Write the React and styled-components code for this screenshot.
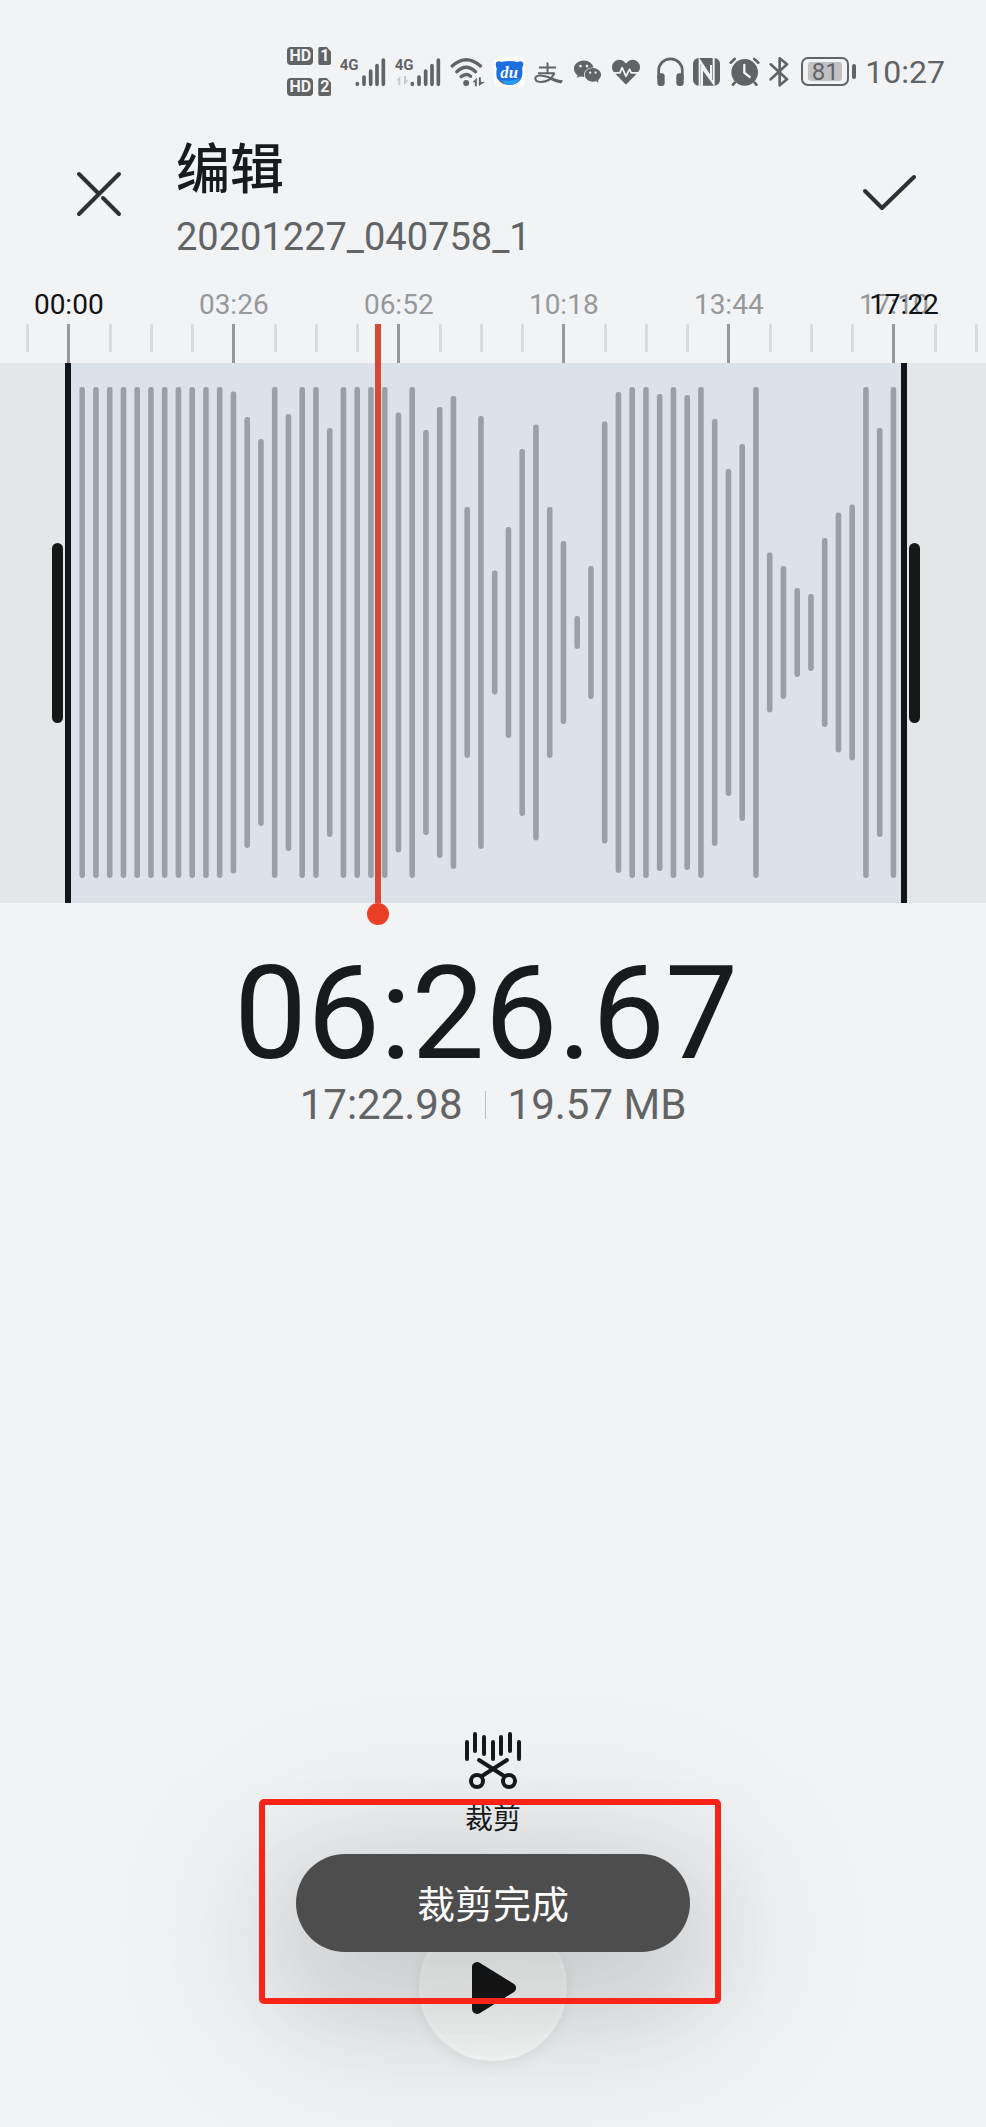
import React, { useState } from "react";
import styled, { createGlobalStyle, css } from "styled-components";
import { AiFillWechat } from "react-icons/ai";
import { FaHeartbeat } from "react-icons/fa";

const GlobalStyle = createGlobalStyle`
  * {
    box-sizing: border-box;
  }
  body {
    margin: 0;
    background: #f1f3f5;
    color: #191a1b;
    font-family: Roboto, "Noto Sans CJK SC", sans-serif;
  }
  button {
    border: 0;
    padding: 0;
    background: none;
    color: inherit;
    font-family: inherit;
    cursor: pointer;
  }
`;

const GREY = "#626365";
const BG = "#f1f3f5";

const Page = styled.main`
  min-height: 100vh;
  display: flex;
  flex-direction: column;
  overflow: hidden;
`;

/* status bar */
const StatusBar = styled.div`
  display: flex;
  justify-content: flex-end;
  align-items: center;
  gap: 17px;
  padding: 47px 41px 0 0;
  color: ${GREY};
`;
const StatusGroup = styled.div`
  display: flex;
  align-items: center;
  gap: 9px;
`;
const StatusIcon = styled.svg`
  display: block;
  height: 30px;
  fill: currentColor;
  text {
    font-family: Roboto, sans-serif;
    font-weight: 700;
  }
`;
const SimList = styled.div`
  display: flex;
  flex-direction: column;
  gap: 13px;
`;
const SimRow = styled.div`
  display: flex;
  gap: 5px;
`;
const Badge = styled.span`
  height: 18px;
  display: flex;
  align-items: center;
  justify-content: center;
  background: ${GREY};
  color: ${BG};
  font-size: 16px;
  font-weight: 700;
  line-height: 18px;
  border-radius: 4px;
  width: ${(p) => (p.$sim ? "13px" : "26px")};
  ${(p) =>
    p.$sim &&
    css`
      border-radius: 2px;
      clip-path: polygon(0 0, 65% 0, 100% 28%, 100% 100%, 0 100%);
    `}
`;
const Battery = styled.div`
  display: flex;
  align-items: center;
  gap: 3px;
  margin-left: 3px;
  &::after {
    content: "";
    width: 4px;
    height: 15px;
    border-radius: 2px;
    background: ${GREY};
  }
`;
const BatteryCell = styled.div`
  width: 48px;
  height: 29px;
  padding: 3px;
  border: 2px solid ${GREY};
  border-radius: 7px;
`;
const BatteryLevel = styled.div`
  height: 100%;
  width: 34px;
  margin: 0 auto;
  border-radius: 3px;
  background: #c0c1c3;
  text-align: center;
  font-size: 24px;
  line-height: 20px;
`;
const Clock = styled.time`
  font-size: 32px;
  line-height: 40px;
`;

/* header */
const Header = styled.header`
  display: flex;
  align-items: center;
  padding: 39px 65px 0 71px;
`;
const HeaderText = styled.div`
  flex: 1;
  display: flex;
  flex-direction: column;
  gap: 6px;
  margin-left: 49px;
`;
const Title = styled.h1`
  margin: 0;
  font-size: 54px;
  font-weight: 500;
  line-height: 72px;
`;
const FileName = styled.p`
  margin: 0;
  font-size: 38px;
  line-height: 48px;
  color: ${GREY};
`;
const IconButton = styled.button`
  display: flex;
  svg {
    fill: none;
    stroke: #2f3032;
    stroke-width: 4;
    stroke-linecap: round;
    stroke-linejoin: round;
  }
`;

/* timeline */
const Timeline = styled.section`
  position: relative;
  padding-top: 28px;
`;
const Ruler = styled.div`
  display: flex;
  justify-content: space-between;
  padding: 0 8px 0 26px;
`;
const Tick = styled.div`
  width: 3px;
  display: flex;
  flex-direction: column;
  align-items: center;
  gap: 3px;
  &::after {
    content: "";
    width: 3px;
    height: ${(p) => (p.$major ? "39px" : "28px")};
    background: ${(p) => (p.$major ? "#97989a" : "#dadbdd")};
  }
`;
const TickLabel = styled.span`
  height: 32px;
  font-size: 28px;
  line-height: 32px;
  white-space: nowrap;
  color: ${(p) => (p.$active ? "#111213" : "#97989a")};
`;
const Wave = styled.div`
  height: 540px;
  display: flex;
  background: #e5e6e7;
`;
const TrimSide = styled.div`
  width: ${(p) => (p.$end ? "79px" : "65px")};
  display: flex;
  align-items: center;
  justify-content: ${(p) => (p.$end ? "flex-start" : "flex-end")};
  padding: 0 2px;
`;
const Grip = styled.button`
  width: 11px;
  height: 180px;
  border-radius: 6px;
  background: #161817;
`;
const Selection = styled.div`
  flex: 1;
  border: solid #11161b;
  border-width: 0 6px;
  background: #dde1ea;
  svg {
    display: block;
    width: 100%;
    height: 100%;
    fill: #9a9fa8;
  }
`;
const Overlay = styled.div`
  position: absolute;
  top: 28px;
  bottom: -22px;
  left: 68px;
  right: 82px;
  pointer-events: none;
`;
const EndLabel = styled(TickLabel)`
  position: absolute;
  top: 0;
  right: 0;
  transform: translateX(50%);
`;
const Playhead = styled.div`
  position: absolute;
  top: 35px;
  bottom: 0;
  width: 22px;
  transform: translateX(-50%);
  display: flex;
  flex-direction: column;
  align-items: center;
  &::before {
    content: "";
    flex: 1;
    width: 6px;
    background: #d64936;
  }
  &::after {
    content: "";
    width: 22px;
    height: 22px;
    border-radius: 50%;
    background: #e83f26;
  }
`;

/* readout */
const Readout = styled.section`
  display: flex;
  flex-direction: column;
  align-items: center;
  padding-top: 47px;
`;
const Position = styled.time`
  padding-right: 14px;
  font-size: 130px;
  line-height: 128px;
`;
const Meta = styled.div`
  display: flex;
  align-items: center;
  gap: 22px;
  font-size: 42px;
  line-height: 54px;
  color: ${GREY};
`;
const Divider = styled.span`
  width: 1px;
  height: 28px;
  background: #bcbdbf;
`;

/* bottom controls */
const Controls = styled.footer`
  position: relative;
  margin-top: auto;
  display: flex;
  flex-direction: column;
  align-items: center;
  gap: 77px;
  padding-bottom: 66px;
`;
const CutButton = styled.button`
  display: flex;
  flex-direction: column;
  align-items: center;
  gap: 14px;
  font-size: 28px;
  line-height: 32px;
`;
const PlayButton = styled.button`
  width: 148px;
  height: 148px;
  display: flex;
  align-items: center;
  justify-content: center;
  border-radius: 50%;
  border: 4px solid #fafbfb;
  background: #f8f9f9;
  box-shadow: 0 4px 16px rgba(0, 0, 0, 0.06);
`;
const Toast = styled.div`
  position: absolute;
  bottom: 175px;
  left: 50%;
  transform: translateX(-50%);
  width: 394px;
  padding: 23px 0 19px;
  border-radius: 49px;
  background: #4d4d4d;
  color: #fff;
  text-align: center;
  font-size: 38px;
  line-height: 56px;
  box-shadow:
    0 40px 100px 10px rgba(0, 0, 0, 0.06),
    0 30px 150px 50px rgba(0, 0, 0, 0.13);
`;
const Highlight = styled.div`
  position: absolute;
  bottom: 123px;
  left: 50%;
  width: 462px;
  height: 205px;
  margin-left: -234px;
  border: 6px solid #fb2318;
  border-radius: 5px;
  pointer-events: none;
`;

const LABELS = ["00:00", "03:26", "06:52", "10:18", "13:44", "17:10"];
const TICKS = Array.from({ length: 24 }, (_, i) => i);
const LEVELS = [
  491, 491, 491, 491, 491, 491, 491, 491, 491, 491, 491, 482, 431, 387, 491,
  437, 491, 491, 409, 491, 491, 491, 491, 440, 491, 405, 451, 473, 251, 433,
  124, 211, 367, 416, 251, 183, 33, 133, 422, 481, 491, 491, 477, 491, 475,
  491, 427, 327, 377, 491, 160, 133, 89, 77, 189, 240, 256, 491, 409, 491,
];
const DURATION = 1042.98;
const POSITION = 386.67;

function Signal({ data }) {
  return (
    <StatusIcon viewBox="0 0 138 90" width="46">
      <text x="-1" y="40" fontSize="45">
        4G
      </text>
      {data && (
        <path d="M4 70L16 58V84H10V70ZM27 57V84L41 70H33V57Z" fill="#c6c7c9" />
      )}
      <g stroke="currentColor" strokeWidth="11" strokeLinecap="round">
        <path d="M52 80V82M72 60V82M92 42V82M111 26V82M130 9V82" />
      </g>
    </StatusIcon>
  );
}

function Wifi() {
  return (
    <StatusIcon viewBox="0 0 104 90" width="35">
      <g
        fill="none"
        stroke="currentColor"
        strokeWidth="10"
        strokeLinecap="round"
      >
        <path d="M6 27Q48 -11 91 27M20 44Q48 18 76 44M33 59Q48 47 61 58" />
      </g>
      <circle cx="48" cy="78" r="9" />
      <path d="M67 76L80 62V88H74V76ZM86 61V87L104 75L92 74V61Z" />
    </StatusIcon>
  );
}

function BaiduDisk() {
  return (
    <StatusIcon viewBox="0 0 92 90" width="31">
      <rect width="92" height="90" rx="16" fill="#fff" />
      <path
        d="M5 24C3 12 14 10 22 15Q46 9 70 15C80 10 90 14 87 25Q84 31 84 36C88 62 76 83 46 84C32 84 12 74 8 62Q5 48 8 36Q6 31 5 24Z"
        fill="#1d6fe0"
      />
      <path d="M20 68Q48 76 78 64Q68 84 46 84Q32 84 20 68Z" fill="#259df2" />
      <path d="M8 66L28 85H14Q8 80 8 66Z" fill="#fff" />
      <path d="M13 71L27 76L32 84Z" fill="#d8434b" />
      <text
        x="45"
        y="63"
        fontSize="50"
        fill="#fff"
        textAnchor="middle"
        style={{ fontFamily: "Liberation Serif", fontStyle: "italic" }}
      >
        du
      </text>
    </StatusIcon>
  );
}

function Alipay() {
  return (
    <StatusIcon viewBox="0 0 88 90" width="29">
      <g fill="none" stroke="currentColor" strokeWidth="6">
        <path d="M15 31H67M41 16V49M12 49H63" />
        <path d="M62 48C54 66 40 76 18 75C0 74 0 58 14 56C36 54 56 68 86 74" />
      </g>
      <path d="M50 63Q68 70 87 70L82 80Q62 76 46 67Z" />
    </StatusIcon>
  );
}

function Headphones() {
  return (
    <StatusIcon viewBox="0 0 81 90" width="27">
      <path
        d="M5 66V41A35 35 0 0 1 76 41V66"
        fill="none"
        stroke="currentColor"
        strokeWidth="8"
      />
      <rect x="1" y="49" width="22" height="38" rx="9" />
      <rect x="58" y="49" width="22" height="38" rx="9" />
    </StatusIcon>
  );
}

function Nfc() {
  return (
    <StatusIcon viewBox="0 0 81 90" width="27">
      <rect y="3" width="81" height="83" rx="17" />
      <g fill="none" stroke={BG} strokeWidth="6">
        <path d="M20 87V10L54 62V24M27 87V32L62 80V3" />
      </g>
    </StatusIcon>
  );
}

function Alarm() {
  return (
    <StatusIcon viewBox="0 0 93 90" width="31">
      <circle cx="47" cy="46" r="40" />
      <g
        fill="none"
        stroke="currentColor"
        strokeWidth="8"
        strokeLinecap="round"
      >
        <path d="M5 17L17 6M88 17L76 6M17 77L12 83M77 77L82 83" />
      </g>
      <path
        d="M46 24V47L62 60"
        fill="none"
        stroke={BG}
        strokeWidth="7"
        strokeLinecap="round"
      />
    </StatusIcon>
  );
}

function Bluetooth() {
  return (
    <StatusIcon viewBox="0 0 60 90" width="20">
      <path
        d="M5 22L54 67L32 85V4L54 22L5 67"
        fill="none"
        stroke="currentColor"
        strokeWidth="8"
        strokeLinejoin="round"
        strokeLinecap="round"
      />
    </StatusIcon>
  );
}

function CutIcon() {
  return (
    <svg
      width="58"
      height="58"
      viewBox="0 0 58 58"
      fill="none"
      stroke="#16181a"
      strokeWidth="4"
      strokeLinecap="round"
    >
      <path d="M3 10V27M11 2V19M20 5V22M29 10V27M37 5V22M46 2V19M55 10V27" />
      <path d="M15 28L40 44M43 28L18 44" />
      <circle cx="13" cy="49" r="6" />
      <circle cx="45" cy="49" r="6" />
    </svg>
  );
}

export default function App() {
  const [playing, setPlaying] = useState(false);
  return (
    <Page>
      <GlobalStyle />
      <StatusBar>
        <StatusGroup>
          <SimList>
            {[1, 2].map((sim) => (
              <SimRow key={sim}>
                <Badge>HD</Badge>
                <Badge $sim>{sim}</Badge>
              </SimRow>
            ))}
          </SimList>
          <Signal />
          <Signal data />
          <Wifi />
          <BaiduDisk />
          <Alipay />
          <AiFillWechat size={31} />
          <FaHeartbeat size={28} />
        </StatusGroup>
        <StatusGroup>
          <Headphones />
          <Nfc />
          <Alarm />
          <Bluetooth />
          <Battery>
            <BatteryCell>
              <BatteryLevel>81</BatteryLevel>
            </BatteryCell>
          </Battery>
          <Clock>10:27</Clock>
        </StatusGroup>
      </StatusBar>

      <Header>
        <IconButton aria-label="关闭">
          <svg width="56" height="56" viewBox="0 0 56 56">
            <path d="M8 4L28 24M32 28L48 44M48 4L8 44" />
          </svg>
        </IconButton>
        <HeaderText>
          <Title>编辑</Title>
          <FileName>20201227_040758_1</FileName>
        </HeaderText>
        <IconButton aria-label="完成">
          <svg width="64" height="56" viewBox="0 0 64 56">
            <path d="M8 21L25 38L57 7" />
          </svg>
        </IconButton>
      </Header>

      <Timeline>
        <Ruler>
          {TICKS.map((i) => {
            const major = i % 4 === 1;
            return (
              <Tick key={i} $major={major}>
                <TickLabel $active={i === 1}>
                  {major ? LABELS[(i - 1) / 4] : ""}
                </TickLabel>
              </Tick>
            );
          })}
        </Ruler>
        <Wave>
          <TrimSide>
            <Grip aria-label="起点" />
          </TrimSide>
          <Selection>
            <svg viewBox="0 0 830 540" preserveAspectRatio="none">
              {LEVELS.map((h, i) => (
                <rect
                  key={i}
                  x={8.4 + i * 13.75}
                  y={269.5 - h / 2}
                  width="5.6"
                  height={h}
                  rx="2.4"
                />
              ))}
            </svg>
          </Selection>
          <TrimSide $end>
            <Grip aria-label="终点" />
          </TrimSide>
        </Wave>
        <Overlay>
          <EndLabel $active>17:22</EndLabel>
          <Playhead style={{ left: `${(POSITION / DURATION) * 100}%` }} />
        </Overlay>
      </Timeline>

      <Readout>
        <Position>06:26.67</Position>
        <Meta>
          <span>17:22.98</span>
          <Divider />
          <span>19.57 MB</span>
        </Meta>
      </Readout>

      <Controls>
        <CutButton>
          <CutIcon />
          裁剪
        </CutButton>
        <PlayButton
          aria-label={playing ? "暂停" : "播放"}
          onClick={() => setPlaying(!playing)}
        >
          <svg width="46" height="54" viewBox="0 0 46 54">
            <path
              d="M7 7V49L41 28Z"
              fill="#161718"
              stroke="#161718"
              strokeWidth="10"
              strokeLinejoin="round"
            />
          </svg>
        </PlayButton>
        <Toast role="status">裁剪完成</Toast>
        <Highlight />
      </Controls>
    </Page>
  );
}
